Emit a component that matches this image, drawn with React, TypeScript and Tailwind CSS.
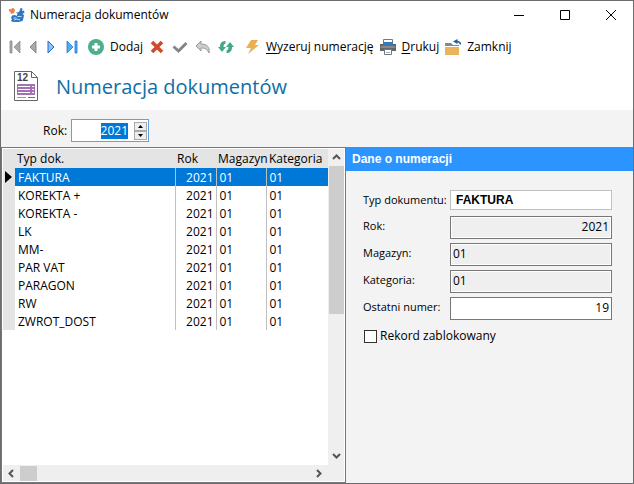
import { useEffect, useRef, useState } from "react";
import type { ReactNode } from "react";

const rows = ["FAKTURA", "KOREKTA +", "KOREKTA -", "LK", "MM-", "PAR VAT", "PARAGON", "RW", "ZWROT_DOST"];

function LogoIcon() {
  return (
    <svg width="16" height="16" viewBox="0 0 16 16" aria-hidden="true">
      <path d="M0 2l2 .5L3 1l2 .5L6 3l-1 3-3 1-.5-2L0 4z" fill="#f4803c" />
      <path d="M7 5l2 .5L10.500 4l1-3 2 .5-.5 2.500 2-.5.5 2-2 1.500 1.500 1-.5 3-1 3-4 1H4l-2-1 1-2-1-1 1-2.500 3-.5 1.500 1L8.500 7z" fill="#2f78c4" />
      <path d="M4.500 11h3M5 13l3-1 3 1M8.500 9.500h4" stroke="#b9d8f5" fill="none" />
    </svg>
  );
}

function ToolButton({ label, children }: { label: string; children: ReactNode }) {
  return (
    <button type="button" aria-label={label} className="flex h-5 w-4 shrink-0 items-center justify-center">
      {children}
    </button>
  );
}

function TextButton({ children }: { children: ReactNode }) {
  return (
    <button type="button" className="flex h-5 shrink-0 items-center gap-1.5 whitespace-nowrap">
      {children}
    </button>
  );
}

function Chevron({ d, label }: { d: string; label: string }) {
  return (
    <button type="button" aria-label={label} className="flex size-4 shrink-0 items-center justify-center">
      <svg width="9" height="9" viewBox="0 0 9 9" fill="none" stroke="#555" strokeWidth="2">
        <path d={d} />
      </svg>
    </button>
  );
}

function TitleBar() {
  return (
    <header className="flex h-7 items-center pl-2">
      <LogoIcon />
      <span className="flex-1 pl-[5px]">Numeracja dokumentów</span>
      <div className="flex h-full">
        <button type="button" aria-label="Minimalizuj" className="flex w-11 items-center justify-center">
          <svg width="10" height="10" stroke="#000" fill="none"><path d="M0 5.5h10" /></svg>
        </button>
        <button type="button" aria-label="Maksymalizuj" className="flex w-12 items-center justify-center">
          <svg width="10" height="10" stroke="#000" fill="none"><path d="M.5.5h9v9h-9z" /></svg>
        </button>
        <button type="button" aria-label="Zamknij okno" className="flex w-11 items-center justify-center">
          <svg width="10" height="10" stroke="#000" fill="none"><path d="M0 0l10 10M10 0L0 10" /></svg>
        </button>
      </div>
    </header>
  );
}

function Toolbar() {
  return (
    <nav className="flex h-9 items-center pl-1.5">
      <div className="flex items-center gap-0.5">
        <ToolButton label="Pierwszy">
          <svg width="14" height="14" viewBox="0 0 14 14"><path d="M2 1h2v12H2zM12 1v12L6 7z" fill="#aaa" stroke="#858585" strokeWidth=".7" /></svg>
        </ToolButton>
        <ToolButton label="Poprzedni">
          <svg width="14" height="14" viewBox="0 0 14 14"><path d="M10 1v12L4 7z" fill="#aaa" stroke="#777" strokeWidth=".8" /></svg>
        </ToolButton>
        <ToolButton label="Następny">
          <svg width="14" height="14" viewBox="0 0 14 14"><path d="M4 1v12l6-6z" fill="#8cc4fa" stroke="#2a62d0" /></svg>
        </ToolButton>
        <span className="w-px" />
        <ToolButton label="Ostatni">
          <svg width="14" height="14" viewBox="0 0 14 14"><path d="M2 1v12l6-6zM10 1h2v12h-2z" fill="#49b0f3" stroke="#2874d0" strokeWidth=".8" /></svg>
        </ToolButton>
      </div>
      <div className="ml-2 flex">
        <TextButton>
          <svg width="16" height="16" viewBox="0 0 16 16"><circle cx="8" cy="8" r="8" fill="#4caf88" /><path d="M8 4v8M4 8h8" stroke="#fff" strokeWidth="3" /></svg>
          <span>Dodaj</span>
        </TextButton>
      </div>
      <div className="ml-1.5 flex items-center gap-[7px]">
        <ToolButton label="Usuń">
          <svg width="14" height="14" viewBox="0 0 14 14"><path d="M2 2l10 10M12 2L2 12" stroke="#d24a2c" strokeWidth="3.600" /></svg>
        </ToolButton>
        <ToolButton label="Zatwierdź">
          <svg width="16" height="14" viewBox="0 0 16 14"><path d="M1.500 6.500l5 4.500 8-8" stroke="#858585" strokeWidth="3" fill="none" /></svg>
        </ToolButton>
        <ToolButton label="Cofnij">
          <svg width="16" height="16" viewBox="0 0 16 16"><path d="M6 2v3c6 0 9 3 8 9-2-4-4-5-8-5v3L1 7z" fill="#ccc" stroke="#999" /></svg>
        </ToolButton>
        <ToolButton label="Odśwież">
          <svg width="16" height="14" viewBox="0 0 16 14">
            <path d="M7.500 1v2.500C6 4 5.500 5 5.500 7H8l-4 5-4-5h2C2 3 4 1 7.500 1z" fill="#45a986" />
            <path d="M8.500 13v-2.500C10 10 10.500 9 10.500 7H8l4-5 4 5h-2c0 4-2 6-5.500 6z" fill="#45a986" />
          </svg>
        </ToolButton>
      </div>
      <div className="ml-3 flex gap-1.5">
        <TextButton>
          <svg width="14" height="16" viewBox="0 0 14 16"><path d="M5 1h7L9 6h4L2 15l3-6H0z" fill="#eab052" /></svg>
          <span><u className="underline-offset-2">W</u>yzeruj numerację</span>
        </TextButton>
        <TextButton>
          <svg width="16" height="16" viewBox="0 0 16 16">
            <path d="M0 5h16v7H0z" fill="#666" />
            <path d="M3.500.5h9V4h-9zM4.500 10.500h7v5h-7z" fill="#fff" stroke="#777" />
            <path d="M3 3h10v4H3z" fill="#3977b5" />
            <path d="M1 8h14" stroke="#aaa" />
            <path d="M6 13.500h4" stroke="#8cb4dc" />
          </svg>
          <span><u className="underline-offset-2">D</u>rukuj</span>
        </TextButton>
        <TextButton>
          <svg width="16" height="16" viewBox="0 0 16 16">
            <path d="M0 4h6l2 2h6v1H0z" fill="#888" />
            <path d="M0 8h14v8H0z" fill="#eab45f" />
            <path d="M12.500 0v5L8 2.500z" fill="#1c5fa8" />
            <path d="M11 2.500q4-.5 4.500 3" stroke="#1c5fa8" strokeWidth="1.500" fill="none" />
          </svg>
          <span>Zamknij</span>
        </TextButton>
      </div>
    </nav>
  );
}

function PageHeading() {
  return (
    <div className="flex h-[45px] items-start pt-1 pl-[13px]">
      <svg width="24" height="30" viewBox="0 0 24 30" className="mt-0.5" aria-hidden="true">
        <path d="M.5.5h17l6 6v23H.5z" fill="#fff" stroke="#666" />
        <path d="M17.500.5v6h6" fill="none" stroke="#666" />
        <path d="M3 13h18v11H3z" fill="#a173b5" />
        <path d="M4 15.500h12M4 18.500h12M4 21.500h12M18 15.500h2M18 18.500h2M18 21.500h2" stroke="#fff" />
        <path d="M3 26.500h9" stroke="#999" /><path d="M14 26.500h7" stroke="#d04a3c" />
        <text x="3" y="10" fontFamily="Liberation Sans, sans-serif" fontWeight="bold" fontSize="10" fill="#444">12</text>
      </svg>
      <h1 className="ml-[18px] text-xl leading-9 text-[#0f6fa5]">Numeracja dokumentów</h1>
    </div>
  );
}

function YearFilter() {
  const [year, setYear] = useState(2021);
  const ref = useRef<HTMLInputElement>(null);
  useEffect(() => {
    ref.current?.focus();
    ref.current?.select();
  }, []);
  return (
    <div className="flex h-[37px] items-center bg-[#f3f3f3] pt-1 pl-[42px]">
      <label htmlFor="year" className="w-7">Rok:</label>
      <div className="flex h-[23px] w-[78px] items-center border border-[#62a2e4] bg-white pr-px">
        <input
          id="year"
          ref={ref}
          inputMode="numeric"
          value={year}
          onChange={(e) => setYear(Number(e.target.value) || 0)}
          className="h-4 min-w-0 flex-1 text-right leading-4 outline-none selection:bg-[#0078d7] selection:text-white"
        />
        <div className="ml-1.5 flex w-[13px] flex-col">
          <button type="button" aria-label="Zwiększ" onClick={() => setYear(year + 1)} className="flex h-[9px] items-center justify-center border border-[#aaa] bg-[#eee]">
            <svg width="5" height="3"><path d="M0 3h5L2.500 0z" /></svg>
          </button>
          <button type="button" aria-label="Zmniejsz" onClick={() => setYear(year - 1)} className="flex h-[9px] items-center justify-center border border-[#aaa] bg-[#eee]">
            <svg width="5" height="3"><path d="M0 0h5L2.500 3z" /></svg>
          </button>
        </div>
      </div>
    </div>
  );
}

function DocumentList() {
  return (
    <section className="flex w-[345px] shrink-0 flex-col border border-[#777] bg-white p-px">
      <div className="flex flex-1">
        <div className="flex-1">
          <table className="w-full table-fixed border-collapse text-left">
            <colgroup>
              <col className="w-3" /><col className="w-40" /><col className="w-[41px]" /><col className="w-[50px]" /><col />
            </colgroup>
            <thead>
              <tr className="h-[19px] bg-[#e4e4e4]">
                <th aria-label="Bieżący" />
                <th className="pl-0.5 font-normal">Typ dok.</th>
                <th className="pl-0.5 font-normal">Rok</th>
                <th className="pl-0.5 font-normal whitespace-nowrap">Magazyn</th>
                <th className="pl-[3px] font-normal">Kategoria</th>
              </tr>
            </thead>
            <tbody>
              {rows.map((name, i) => (
                <tr key={name} className={i === 0 ? "h-[18px] bg-[#0078d7] leading-4 text-white" : "h-[18px] leading-4"}>
                  <td className="bg-[#e4e4e4]">
                    {i === 0 && <svg width="7" height="12" viewBox="0 0 7 12" className="ml-0.5"><path d="M0 0v12l7-6z" /></svg>}
                  </td>
                  <td className="border-r border-[#c0c0c0] pt-0.5 pl-[3px]">{name}</td>
                  <td className="border-r border-[#c0c0c0] pt-0.5 pr-0.5 text-right">2021</td>
                  <td className="border-r border-[#c0c0c0] pt-0.5 pl-[3px]">01</td>
                  <td className="pt-0.5 pl-[3px]">01</td>
                </tr>
              ))}
            </tbody>
          </table>
        </div>
        <div className="flex w-4 flex-col items-center bg-[#efefef] pb-0.5">
          <Chevron label="W górę" d="M1 6l3.500-3.500L8 6" />
          <div className="mt-px h-[148px] w-[15px] bg-[#cdcdcd]" />
          <div className="flex-1" />
          <Chevron label="W dół" d="M1 3l3.500 3.500L8 3" />
        </div>
      </div>
      <div className="flex h-4 items-center bg-[#efefef] pr-[18px]">
        <Chevron label="W lewo" d="M6 1L2.500 4.500 6 8" />
        <div className="ml-px h-[15px] w-[17px] bg-[#cdcdcd]" />
        <div className="flex-1" />
        <Chevron label="W prawo" d="M3 1l3.500 3.500L3 8" />
      </div>
    </section>
  );
}

function Field({ id, label, value, right, editable }: { id: string; label: string; value: string; right?: boolean; editable?: boolean }) {
  return (
    <div className="flex h-[23px]">
      <label htmlFor={id} className="w-[87px] shrink-0 text-[11px] leading-5">{label}</label>
      <input
        id={id}
        defaultValue={value}
        readOnly={!editable}
        className={`w-[162px] border border-[#777] px-0.5 pb-0.5 outline-none ${right ? "text-right" : ""} ${editable ? "bg-white" : "bg-[#efefef] ring-1 ring-white ring-inset"}`}
      />
    </div>
  );
}

function Details() {
  return (
    <section className="min-w-0 flex-1">
      <h2 className="h-6 bg-[#2b94ff] pl-1.5 font-['Liberation_Sans',sans-serif] text-xs leading-6 font-bold text-white">Dane o numeracji</h2>
      <form className="flex flex-col gap-1 pt-[19px] pl-[17px]">
        <div className="mb-0.5 flex h-5">
          <label htmlFor="kind" className="w-[87px] shrink-0 text-[11px] leading-5">Typ dokumentu:</label>
          <input id="kind" readOnly value="FAKTURA" className="w-[162px] border border-[#c0c0c0] bg-white px-[5px] font-['Liberation_Sans',sans-serif] text-xs font-bold outline-none" />
        </div>
        <Field id="rok" label="Rok:" value="2021" right />
        <Field id="magazyn" label="Magazyn:" value="01" />
        <Field id="kategoria" label="Kategoria:" value="01" />
        <Field id="numer" label="Ostatni numer:" value="19" right editable />
        <label className="mt-1 flex items-center gap-[3px]">
          <input type="checkbox" className="ml-px size-[13px] appearance-none border border-[#333] bg-white checked:bg-[#0078d7]" />
          Rekord zablokowany
        </label>
      </form>
    </section>
  );
}

export default function App() {
  return (
    <main className="flex min-h-screen flex-col border border-[#6c6c6e] bg-white font-['Open_Sans','Noto_Sans',sans-serif] text-xs text-black">
      <TitleBar />
      <Toolbar />
      <PageHeading />
      <YearFilter />
      <div className="flex flex-1 bg-[#f3f3f3]">
        <DocumentList />
        <Details />
      </div>
    </main>
  );
}
